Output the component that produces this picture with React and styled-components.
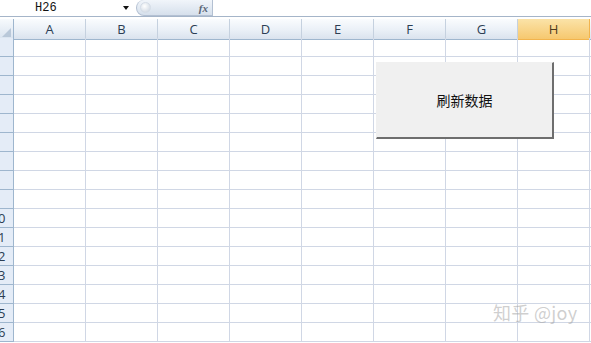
import React from "react";
import styled, { createGlobalStyle } from "styled-components";

const GlobalStyle = createGlobalStyle`
  html, body {
    margin: 0;
    padding: 0;
    background: #ffffff;
    overflow: hidden;
  }
`;

const COLUMNS = ["A", "B", "C", "D", "E", "F", "G", "H", "I"];
const ROW_COUNT = 16;
const ACTIVE_COL = "H";

// Sheet window
const Page = styled.div`
  position: relative;
  width: 591px;
  height: 343px;
  overflow: hidden;
  background: #ffffff;
  font-family: "Liberation Sans", Arial, sans-serif;
`;

// Name box + formula bar strip
const FormulaBar = styled.div`
  display: flex;
  align-items: stretch;
  height: 16px;
  border-bottom: 1px solid #a5b5c9;
  margin-bottom: 2px;
`;

const NameBox = styled.div`
  display: flex;
  align-items: center;
  width: 136px;
  box-sizing: border-box;
  padding-left: 35px;
  font-family: "Liberation Mono", "Courier New", monospace;
  font-size: 12px;
  color: #111;
`;

const NameText = styled.span`
  flex: 1;
`;

const DropArrow = styled.span`
  width: 0;
  height: 0;
  margin-right: 7px;
  border-left: 3.5px solid transparent;
  border-right: 3.5px solid transparent;
  border-top: 4px solid #111;
`;

const FxPill = styled.div`
  display: flex;
  align-items: center;
  justify-content: space-between;
  width: 77px;
  box-sizing: border-box;
  padding: 0 4px 0 3px;
  border-radius: 9px 0 0 9px;
  border: 1px solid #b3c0d2;
  border-top: none;
  background: linear-gradient(#f1f5fa, #d6e0ec);
`;

const Knob = styled.span`
  width: 9px;
  height: 9px;
  border-radius: 50%;
  background: radial-gradient(circle at 40% 35%, #ffffff, #c8d2de);
  border: 1px solid #d5dde7;
`;

const FxLabel = styled.span`
  font-family: "Liberation Serif", "Times New Roman", serif;
  font-style: italic;
  font-weight: bold;
  font-size: 11px;
  color: #5a6677;
`;

// Grid of headers and cells
const Grid = styled.div`
  display: grid;
  grid-template-columns: 14px repeat(9, 72px);
  grid-auto-rows: 19px;
`;

const Corner = styled.div`
  position: relative;
  height: 21px;
  box-sizing: border-box;
  border-right: 1px solid #9eb6ce;
  border-bottom: 1px solid #9eb6ce;
  background: linear-gradient(#f7fafd, #d9e3ef);
  overflow: hidden;

  &::after {
    content: "";
    position: absolute;
    right: 2px;
    bottom: 2px;
    border-left: 9px solid transparent;
    border-bottom: 9px solid #b9c8d9;
  }
`;

const ColHeader = styled.div`
  height: 21px;
  box-sizing: border-box;
  display: flex;
  align-items: center;
  justify-content: center;
  font-family: "Open Sans", "Liberation Sans", sans-serif;
  font-size: 13px;
  color: ${(p) => (p.$active ? "#4b3b1e" : "#2c3e54")};
  border-right: 1px solid ${(p) => (p.$active ? "#f2b44d" : "#c5d1df")};
  border-bottom: 1px solid ${(p) => (p.$active ? "#f2b44d" : "#9eb6ce")};
  background: ${(p) =>
    p.$active
      ? "linear-gradient(#fbe3a8, #f6c86f)"
      : "linear-gradient(#fafcfe 0%, #eaf0f7 55%, #dae3ee 100%)"};
`;

const RowHeader = styled.div`
  position: relative;
  box-sizing: border-box;
  overflow: hidden;
  background: #e4ecf7;
  border-right: 1px solid #9eb6ce;
  border-bottom: 1px solid #9eb6ce;
`;

const RowNumber = styled.span`
  position: absolute;
  left: ${(p) => (p.$wide ? "-17px" : "-22px")};
  top: 0;
  width: 30px;
  line-height: 18px;
  text-align: center;
  font-family: "Open Sans", "Liberation Sans", sans-serif;
  font-size: 13px;
  color: #2c3e54;
`;

const Cell = styled.div`
  box-sizing: border-box;
  border-right: 1px solid #d0d7e5;
  border-bottom: 1px solid #d0d7e5;
`;

// Form button floating over the sheet
const RefreshButton = styled.button`
  position: absolute;
  left: 376px;
  top: 62px;
  width: 178px;
  height: 77px;
  margin: 0;
  padding: 0;
  box-sizing: border-box;
  background: #f0f0f0;
  border: 1px solid #f0f0f0;
  border-right: 2px solid #6e6e6e;
  border-bottom: 2px solid #6e6e6e;
  font-family: "Noto Sans CJK SC", "Noto Sans", sans-serif;
  font-size: 14px;
  color: #111;
  cursor: default;
`;

const Watermark = styled.div`
  position: absolute;
  left: 493px;
  top: 299px;
  font-family: "Noto Sans CJK SC", "Noto Sans", sans-serif;
  font-size: 18px;
  color: rgba(160, 160, 160, 0.5);
  letter-spacing: 0.3px;
  white-space: nowrap;
`;

export default function App() {
  const rows = Array.from({ length: ROW_COUNT }, (_, i) => i + 1);

  return (
    <Page>
      <GlobalStyle />
      <FormulaBar>
        <NameBox>
          <NameText>H26</NameText>
          <DropArrow />
        </NameBox>
        <FxPill>
          <Knob />
          <FxLabel>fx</FxLabel>
        </FxPill>
      </FormulaBar>

      <Grid>
        <Corner />
        {COLUMNS.map((c) => (
          <ColHeader key={c} $active={c === ACTIVE_COL}>
            {c === "I" ? "" : c}
          </ColHeader>
        ))}
        {rows.map((r) => (
          <React.Fragment key={r}>
            <RowHeader>
              <RowNumber $wide={r >= 10}>{r}</RowNumber>
            </RowHeader>
            {COLUMNS.map((c) => (
              <Cell key={c} />
            ))}
          </React.Fragment>
        ))}
      </Grid>

      <RefreshButton>刷新数据</RefreshButton>
      <Watermark>知乎 @joy</Watermark>
    </Page>
  );
}
